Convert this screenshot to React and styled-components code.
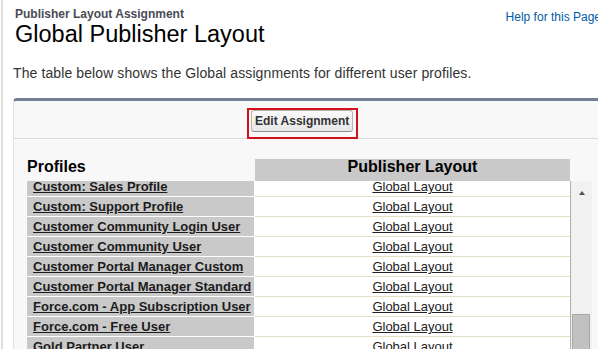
import React from "react";
import styled, { createGlobalStyle } from "styled-components";

const profiles = [
  "Custom: Sales Profile",
  "Custom: Support Profile",
  "Customer Community Login User",
  "Customer Community User",
  "Customer Portal Manager Custom",
  "Customer Portal Manager Standard",
  "Force.com - App Subscription User",
  "Force.com - Free User",
  "Gold Partner User",
  "High Volume Customer Portal"
];

export default function App() {
  return (
    <>
      <GlobalStyle />
      <Page>
        <Header>
          <TitleBlock>
            <Subtitle>Publisher Layout Assignment</Subtitle>
            <Title>Global Publisher Layout</Title>
          </TitleBlock>
          <HelpLink href="#">Help for this Page</HelpLink>
        </Header>
        <Description>
          The table below shows the Global assignments for different user
          profiles.
        </Description>
        <Panel>
          <ButtonBar>
            <Highlight>
              <Button type="button">Edit Assignment</Button>
            </Highlight>
          </ButtonBar>
          <PanelBody>
            <Table>
              <HeadRow>
                <HeadCell>Profiles</HeadCell>
                <HeadCell $shaded>Publisher Layout</HeadCell>
              </HeadRow>
              <Scroller>
                <Viewport>
                  <Rows>
                    {profiles.map(name => (
                      <Row key={name}>
                        <ProfileCell>
                          <ProfileLink href="#">{name}</ProfileLink>
                        </ProfileCell>
                        <LayoutCell>
                          <LayoutLink href="#">Global Layout</LayoutLink>
                        </LayoutCell>
                      </Row>
                    ))}
                  </Rows>
                </Viewport>
                <ScrollTrack>
                  <ArrowButton>
                    <ArrowUp />
                  </ArrowButton>
                  <Thumb $offset={115} />
                </ScrollTrack>
              </Scroller>
            </Table>
          </PanelBody>
        </Panel>
      </Page>
    </>
  );
}

const GlobalStyle = createGlobalStyle`
  html, body {
    margin: 0;
    padding: 0;
    background: #fff;
    overflow: hidden;
  }
  body {
    font-family: "Liberation Sans", Arial, sans-serif;
    color: #222;
  }
`;

const Page = styled.div`
  width: 620px;
  height: 349px;
  margin-left: 1px;
  border-left: 2px solid #dedede;
  padding: 7px 0 0 10px;
  box-sizing: border-box;
  overflow: hidden;
`;

const Header = styled.div`
  display: flex;
  align-items: flex-start;
`;

const TitleBlock = styled.div`
  padding-left: 2px;
`;

const Subtitle = styled.div`
  font-size: 12px;
  line-height: 14px;
  font-weight: bold;
  color: #4a4a56;
`;

const Title = styled.h1`
  margin: 0;
  font-size: 23.5px;
  line-height: 26px;
  font-weight: normal;
  color: #000;
`;

const HelpLink = styled.a`
  margin: 3px 0 0 auto;
  padding-right: 20px;
  font-size: 12px;
  line-height: 14px;
  color: #015ba7;
  text-decoration: none;
  white-space: nowrap;
`;

const Description = styled.p`
  margin: 18px 0 0;
  font-size: 14px;
  line-height: 16px;
  letter-spacing: 0.1px;
  color: #333;
`;

const Panel = styled.div`
  margin-top: 17px;
  background: #f8f8f8;
  border: 1px solid #e0e3e5;
  border-top: 3px solid #747e96;
  border-radius: 4px 0 0 0;
`;

const ButtonBar = styled.div`
  height: 30px;
  padding: 7px 0 0 233px;
  border-bottom: 1px solid #dbdbdb;
`;

const Highlight = styled.div`
  display: inline-block;
  border: 2px solid #d0101b;
  padding: 0 3px 5px 2px;
`;

const Button = styled.button`
  display: block;
  margin: 0;
  padding: 3px 3px;
  font-family: "Liberation Sans", Arial, sans-serif;
  font-size: 12px;
  line-height: 14px;
  font-weight: bold;
  color: #333;
  background: linear-gradient(#fbfbfb, #e6e6e6);
  border: 1px solid #b5b5b5;
  border-bottom-color: #8f8f8f;
  border-radius: 3px;
`;

const PanelBody = styled.div`
  padding: 20px 0 0 13px;
`;

const Table = styled.div`
  width: 565px;
`;

const HeadRow = styled.div`
  display: grid;
  grid-template-columns: 227px 315px;
  column-gap: 1px;
`;

const HeadCell = styled.div`
  height: 22px;
  font-size: 16px;
  line-height: 16px;
  font-weight: bold;
  color: #000;
  text-align: ${p => (p.$shaded ? "center" : "left")};
  background: ${p => (p.$shaded ? "#c9c9c9" : "transparent")};
`;

const Scroller = styled.div`
  display: flex;
  height: 200px;
`;

const Viewport = styled.div`
  width: 543px;
  overflow: hidden;
  background: #fff;
`;

const Rows = styled.div`
  margin-top: -4px;
`;

const Row = styled.div`
  display: grid;
  grid-template-columns: 227px 315px;
  column-gap: 1px;
`;

const ProfileCell = styled.div`
  height: 19px;
  padding-left: 6px;
  background: #c9c9c9;
  border-bottom: 1px solid #fff;
  font-size: 13px;
  line-height: 19px;
  font-weight: bold;
  white-space: nowrap;
  overflow: hidden;
`;

const ProfileLink = styled.a`
  color: #1c1c1c;
  text-decoration: underline;
`;

const LayoutCell = styled.div`
  height: 19px;
  border-bottom: 1px solid #e4e0c3;
  font-size: 13px;
  line-height: 19px;
  text-align: center;
`;

const LayoutLink = styled.a`
  color: #222;
  text-decoration: underline;
`;

const ScrollTrack = styled.div`
  display: flex;
  flex-direction: column;
  width: 21px;
  border-left: 1px solid #b0b0b0;
  background: #f1f1f1;
`;

const ArrowButton = styled.div`
  display: flex;
  justify-content: center;
  height: 20px;
  padding-top: 10px;
  box-sizing: border-box;
`;

const ArrowUp = styled.div`
  width: 0;
  height: 0;
  border-left: 3.5px solid transparent;
  border-right: 3.5px solid transparent;
  border-bottom: 4px solid #505050;
`;

const Thumb = styled.div`
  margin: ${p => p.$offset}px 2px 0 1px;
  height: 80px;
  background: #c1c1c1;
  border: 1px solid #a8a8a8;
  border-bottom: none;
`;
